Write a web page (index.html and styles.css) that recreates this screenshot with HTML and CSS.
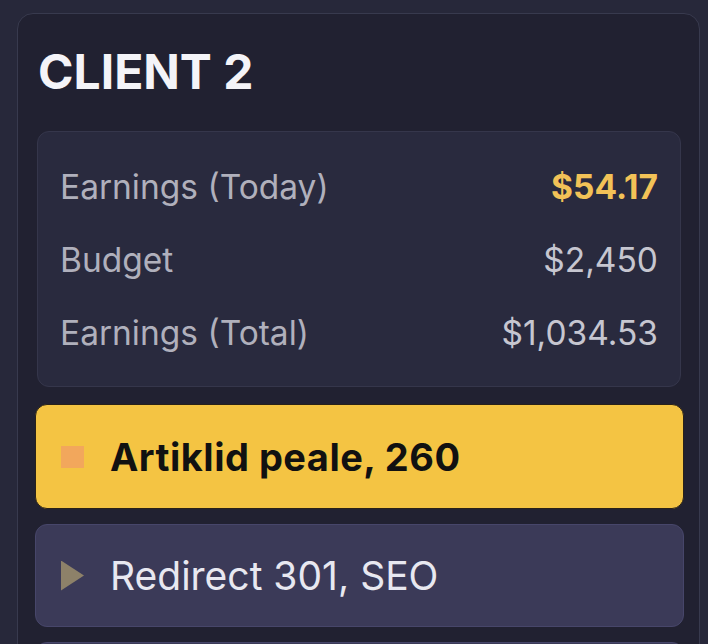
FILE: index.html
```html
<!DOCTYPE html>
<html lang="en">
<head>
  <meta charset="UTF-8" />
  <meta name="viewport" content="width=device-width, initial-scale=1.0"/>
  <title>Client 2</title>
  <link rel="stylesheet" href="styles.css">
</head>
<body>
  <div class="client-card">
    <h1>CLIENT 2</h1>

    <div class="stats">
      <div class="stat-row">
        <span class="stat-label">Earnings (Today)</span>
        <span class="stat-value gold">$54.17</span>
      </div>
      <div class="stat-row">
        <span class="stat-label">Budget</span>
        <span class="stat-value">$2,450</span>
      </div>
      <div class="stat-row">
        <span class="stat-label">Earnings (Total)</span>
        <span class="stat-value">$1,034.53</span>
      </div>
    </div>

    <div class="task active">
      <span class="task-icon stop"></span>
      <span class="task-name">Artiklid peale, 260</span>
    </div>
    <div class="task">
      <span class="task-icon play"></span>
      <span class="task-name">Redirect 301, SEO</span>
    </div>
    <div class="task">
      <span class="task-icon play"></span>
      <span class="task-name">&nbsp;</span>
    </div>
  </div>
</body>
</html>
```

FILE: styles.css
```css
html, body {
  height: 100%;
  overflow: hidden;
}

body {
  font-family: 'Inter', 'Noto Sans', sans-serif;
  background-color: #27283a;
  margin: 0;
  padding: 13px 8px 0 17px;
}

.client-card {
  background: #212131;
  border: 1px solid #383a4e;
  border-radius: 16px;
  padding: 20px 15px 20px 17px;
  width: 683px;
  box-sizing: border-box;
}

h1 {
  margin: 0 0 21px 3px;
  font-size: 48px;
  line-height: 76px;
  font-weight: 700;
  color: #f4f4f8;
}

.stats {
  background: #292a3e;
  border: 1px solid #35364b;
  border-radius: 12px;
  margin: 0 3px 17px 2px;
  padding: 18px 22px 17px 22px;
}

.stat-row {
  display: flex;
  justify-content: space-between;
  align-items: center;
  height: 73px;
  font-size: 33.5px;
}

.stat-label {
  color: #b0b0bc;
}

.stat-value {
  color: #c6c6d0;
}

.stat-value.gold {
  color: #f2c257;
  font-weight: 700;
}

.task {
  display: flex;
  align-items: center;
  gap: 26px;
  height: 103px;
  padding: 0 25px;
  margin-bottom: 15px;
  background: #3b3a58;
  border: 1px solid #47466a;
  border-radius: 12px;
  box-sizing: border-box;
  color: #e8e8f0;
  font-size: 39px;
}

.task.active {
  height: 105px;
  background: #f4c443;
  border-color: #2a2218;
  color: #111;
  font-size: 38px;
  font-weight: 700;
  letter-spacing: 0.5px;
}

.task-icon {
  width: 23px;
  height: 22px;
  flex-shrink: 0;
}

.task-icon.stop {
  background: #f2a75c;
}

.task-icon.play {
  height: 30px;
  background: #8d8169;
  clip-path: polygon(0 0, 100% 50%, 0 100%);
}
```
